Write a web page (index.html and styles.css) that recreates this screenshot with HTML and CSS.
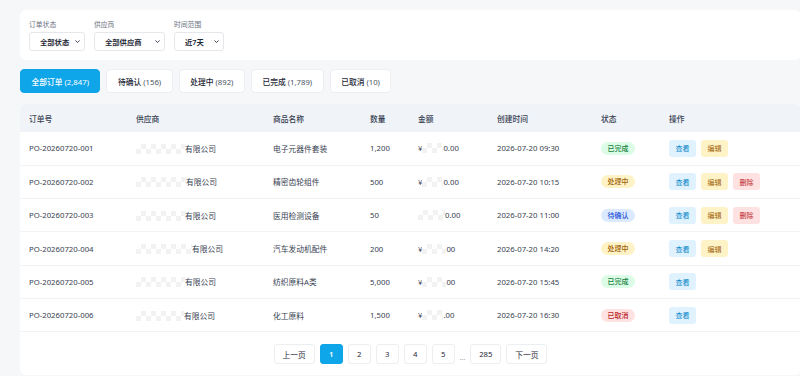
FILE: index.html
```html
<!DOCTYPE html>
<html lang="zh-CN">
<head>
  <meta charset="UTF-8">
  <meta name="viewport" content="width=device-width, initial-scale=1.0">
  <title>采购订单</title>
  <link rel="stylesheet" href="styles.css">
</head>
<body>
  <div class="page">
    <!-- 筛选区 -->
    <div class="filter-card">
      <div class="field">
        <label>订单状态</label>
        <div class="select w-status">
          <span>全部状态</span>
          <svg viewBox="0 0 10 10"><path d="M2 3.5 5 6.5 8 3.5"/></svg>
        </div>
      </div>
      <div class="field">
        <label>供应商</label>
        <div class="select w-supplier">
          <span>全部供应商</span>
          <svg viewBox="0 0 10 10"><path d="M2 3.5 5 6.5 8 3.5"/></svg>
        </div>
      </div>
      <div class="field">
        <label>时间范围</label>
        <div class="select w-range">
          <span>近7天</span>
          <svg viewBox="0 0 10 10"><path d="M2 3.5 5 6.5 8 3.5"/></svg>
        </div>
      </div>
    </div>

    <!-- 状态标签 -->
    <div class="tabs">
      <button class="tab active">全部订单 <span class="count">(2,847)</span></button>
      <button class="tab">待确认 <span class="count">(156)</span></button>
      <button class="tab">处理中 <span class="count">(892)</span></button>
      <button class="tab">已完成 <span class="count">(1,789)</span></button>
      <button class="tab">已取消 <span class="count">(10)</span></button>
    </div>

    <!-- 订单表格 -->
    <div class="table-card">
      <table>
        <colgroup>
          <col style="width:107px"><col style="width:137px"><col style="width:97px"><col style="width:48px">
          <col style="width:79px"><col style="width:104px"><col style="width:68px"><col>
        </colgroup>
        <thead>
          <tr>
            <th>订单号</th><th>供应商</th><th>商品名称</th><th>数量</th>
            <th>金额</th><th>创建时间</th><th>状态</th><th>操作</th>
          </tr>
        </thead>
        <tbody>
          <tr>
            <td>PO-20260720-001</td>
            <td><span class="mask" style="width:49px"></span>有限公司</td>
            <td>电子元器件套装</td>
            <td>1,200</td>
            <td>¥<span class="mask" style="width:21px"></span>0.00</td>
            <td>2026-07-20 09:30</td>
            <td><span class="pill done">已完成</span></td>
            <td><div class="actions"><button class="act view">查看</button><button class="act edit">编辑</button></div></td>
          </tr>
          <tr>
            <td>PO-20260720-002</td>
            <td><span class="mask" style="width:50px"></span>有限公司</td>
            <td>精密齿轮组件</td>
            <td>500</td>
            <td>¥<span class="mask" style="width:21px"></span>0.00</td>
            <td>2026-07-20 10:15</td>
            <td><span class="pill doing">处理中</span></td>
            <td><div class="actions"><button class="act view">查看</button><button class="act edit">编辑</button><button class="act del">删除</button></div></td>
          </tr>
          <tr>
            <td>PO-20260720-003</td>
            <td><span class="mask" style="width:49px"></span>有限公司</td>
            <td>医用检测设备</td>
            <td>50</td>
            <td><span class="mask" style="width:27px"></span>0.00</td>
            <td>2026-07-20 11:00</td>
            <td><span class="pill pending">待确认</span></td>
            <td><div class="actions"><button class="act view">查看</button><button class="act edit">编辑</button><button class="act del">删除</button></div></td>
          </tr>
          <tr>
            <td>PO-20260720-004</td>
            <td><span class="mask" style="width:56px"></span>有限公司</td>
            <td>汽车发动机配件</td>
            <td>200</td>
            <td>¥<span class="mask" style="width:24px"></span>00</td>
            <td>2026-07-20 14:20</td>
            <td><span class="pill doing">处理中</span></td>
            <td><div class="actions"><button class="act view">查看</button><button class="act edit">编辑</button></div></td>
          </tr>
          <tr>
            <td>PO-20260720-005</td>
            <td><span class="mask" style="width:49px"></span>有限公司</td>
            <td>纺织原料A类</td>
            <td>5,000</td>
            <td>¥<span class="mask" style="width:24px"></span>00</td>
            <td>2026-07-20 15:45</td>
            <td><span class="pill done">已完成</span></td>
            <td><div class="actions"><button class="act view">查看</button></div></td>
          </tr>
          <tr>
            <td>PO-20260720-006</td>
            <td><span class="mask" style="width:48px"></span>有限公司</td>
            <td>化工原料</td>
            <td>1,500</td>
            <td>¥<span class="mask" style="width:21px"></span>.00</td>
            <td>2026-07-20 16:30</td>
            <td><span class="pill cancel">已取消</span></td>
            <td><div class="actions"><button class="act view">查看</button></div></td>
          </tr>
        </tbody>
      </table>

      <!-- 分页 -->
      <div class="pager">
        <button class="pg wide">上一页</button>
        <button class="pg current">1</button>
        <button class="pg">2</button>
        <button class="pg">3</button>
        <button class="pg">4</button>
        <button class="pg">5</button>
        <span class="dots">...</span>
        <button class="pg num3">285</button>
        <button class="pg wide">下一页</button>
      </div>
    </div>
  </div>
</body>
</html>
```

FILE: styles.css
```css
* {
  margin: 0;
  padding: 0;
  box-sizing: border-box;
}
html, body {
  overflow: hidden;
}
body {
  font-family: "Noto Sans", "Noto Sans CJK SC", sans-serif;
  font-size: 7.75px;
  background: #f6f7f9;
  color: #374151;
}
.page {
  width: 781px;
  margin-left: 20px;
  padding-top: 10px;
}
/* 筛选区 */
.filter-card {
  background: #fff;
  border-radius: 6px;
  height: 50px;
  padding: 10px 9px 0;
  display: flex;
  gap: 9px;
}
.field {
  display: flex;
  flex-direction: column;
  gap: 2px;
}
.field label {
  font-size: 6.8px;
  color: #6b7280;
  line-height: 10px;
}
.select {
  height: 19px;
  border: 1px solid #e5e7eb;
  border-radius: 3px;
  display: flex;
  align-items: center;
  justify-content: space-between;
  padding: 0 3px 0 10px;
  font-size: 7.3px;
  font-weight: 600;
  color: #1f2937;
  background: #fff;
}
.select svg {
  width: 7px;
  height: 7px;
  fill: none;
  stroke: #374151;
  stroke-width: 1.4;
}
.w-status { width: 56px; }
.w-supplier { width: 71px; }
.w-range { width: 50px; }

/* 状态标签 */
.tabs {
  display: flex;
  gap: 6px;
  margin-top: 9px;
}
.tab {
  font-family: inherit;
  font-size: 7.75px;
  height: 24px;
  padding: 0 10.5px;
  white-space: nowrap;
  border: 1px solid #eceef2;
  border-radius: 4px;
  background: #fff;
  color: #1f2937;
  font-weight: 500;
}
.tab .count {
  font-weight: 400;
  color: #4b5563;
}
.tab.active {
  background: #0ea5e9;
  border-color: #0ea5e9;
  color: #fff;
}
.tab.active .count {
  color: #fff;
}

/* 表格 */
.table-card {
  margin-top: 11px;
  background: #fff;
  border-radius: 6px;
  overflow: hidden;
  height: 271px;
}
table {
  width: 100%;
  border-collapse: collapse;
  table-layout: fixed;
}
thead tr {
  height: 28px;
  background: #f0f3f8;
}
th {
  text-align: left;
  font-weight: 500;
  color: #374151;
  padding: 0 9px;
}
tbody tr {
  height: 33.33px;
}
td {
  padding: 0 9px;
  border-bottom: 1px solid #f1f3f6;
  white-space: nowrap;
  color: #374151;
}
.mask {
  display: inline-block;
  height: 10px;
  vertical-align: -2px;
  background-color: #fff;
  background-image: repeating-conic-gradient(#f2f2f2 0 25%, #fff 0 50%);
  background-size: 10px 10px;
}
.pill {
  display: inline-block;
  width: 34px;
  height: 13px;
  line-height: 13px;
  border-radius: 7px;
  text-align: center;
  font-size: 7px;
  font-weight: 500;
}
.pill.done { background: #dcfce7; color: #15803d; }
.pill.doing { background: #fef3c7; color: #a16207; }
.pill.pending { background: #dbeafe; color: #1d4ed8; }
.pill.cancel { background: #fee2e2; color: #b91c1c; }
.actions {
  display: flex;
  gap: 5px;
}
.act {
  font-family: inherit;
  font-size: 7px;
  width: 27px;
  height: 17px;
  border: none;
  border-radius: 3px;
}
.act.view { background: #e0f2fe; color: #0284c7; }
.act.edit { background: #fef3c7; color: #a16207; }
.act.del { background: #fee2e2; color: #b91c1c; }

/* 分页 */
.pager {
  display: flex;
  justify-content: center;
  align-items: center;
  gap: 5px;
  padding-top: 12px;
}
.pg {
  font-family: inherit;
  font-size: 7.75px;
  height: 20px;
  min-width: 23px;
  border: 1px solid #eceef2;
  border-radius: 3px;
  background: #fff;
  color: #1f2937;
}
.pg.wide { width: 41px; }
.pg.num3 { width: 31px; }
.pg.current {
  background: #0ea5e9;
  border-color: #0ea5e9;
  color: #fff;
  font-weight: 600;
}
.dots {
  color: #9ca3af;
  font-size: 7px;
  padding-top: 6px;
}
```
